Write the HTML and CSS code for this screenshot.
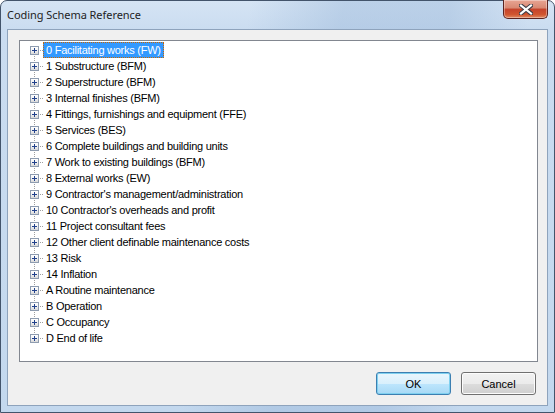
FILE: index.html
```html
<!DOCTYPE html>
<html lang="en">
<head>
    <meta charset="UTF-8">
    <title>Coding Schema Reference</title>
    <link rel="stylesheet" href="styles.css">
</head>
<body>
    <div class="window">
        <div class="titlebar">
            <span class="title">Coding Schema Reference</span>
            <button class="close" aria-label="Close">
                <svg width="14" height="11" viewBox="0 0 14 11">
                    <path d="M2 1.5 L12 9.5 M12 1.5 L2 9.5" stroke="#3b3b45" stroke-width="4.2" stroke-linecap="square"/>
                    <path d="M2 1.5 L12 9.5 M12 1.5 L2 9.5" stroke="#ffffff" stroke-width="2.2" stroke-linecap="square"/>
                </svg>
            </button>
        </div>

        <div class="client">
            <ul class="tree">
                <li><span class="toggle"></span><span class="branch"></span><span class="label selected">0 Facilitating works (FW)</span></li>
                <li><span class="toggle"></span><span class="branch"></span><span class="label">1 Substructure (BFM)</span></li>
                <li><span class="toggle"></span><span class="branch"></span><span class="label">2 Superstructure (BFM)</span></li>
                <li><span class="toggle"></span><span class="branch"></span><span class="label">3 Internal finishes (BFM)</span></li>
                <li><span class="toggle"></span><span class="branch"></span><span class="label">4 Fittings, furnishings and equipment (FFE)</span></li>
                <li><span class="toggle"></span><span class="branch"></span><span class="label">5 Services (BES)</span></li>
                <li><span class="toggle"></span><span class="branch"></span><span class="label">6 Complete buildings and building units</span></li>
                <li><span class="toggle"></span><span class="branch"></span><span class="label">7 Work to existing buildings (BFM)</span></li>
                <li><span class="toggle"></span><span class="branch"></span><span class="label">8 External works (EW)</span></li>
                <li><span class="toggle"></span><span class="branch"></span><span class="label">9 Contractor's management/administration</span></li>
                <li><span class="toggle"></span><span class="branch"></span><span class="label">10 Contractor's overheads and profit</span></li>
                <li><span class="toggle"></span><span class="branch"></span><span class="label">11 Project consultant fees</span></li>
                <li><span class="toggle"></span><span class="branch"></span><span class="label">12 Other client definable maintenance costs</span></li>
                <li><span class="toggle"></span><span class="branch"></span><span class="label">13 Risk</span></li>
                <li><span class="toggle"></span><span class="branch"></span><span class="label">14 Inflation</span></li>
                <li><span class="toggle"></span><span class="branch"></span><span class="label">A Routine maintenance</span></li>
                <li><span class="toggle"></span><span class="branch"></span><span class="label">B Operation</span></li>
                <li><span class="toggle"></span><span class="branch"></span><span class="label">C Occupancy</span></li>
                <li><span class="toggle"></span><span class="branch"></span><span class="label">D End of life</span></li>
            </ul>

            <div class="buttons">
                <button class="btn default">OK</button>
                <button class="btn">Cancel</button>
            </div>
        </div>
    </div>
</body>
</html>
```

FILE: styles.css
```css
html, body {
    margin: 0;
    padding: 0;
    background: #ffffff;
}

.window {
    box-sizing: border-box;
    width: 555px;
    height: 413px;
    display: flex;
    flex-direction: column;
    padding: 0 6px 6px;
    border: 1px solid #43546b;
    border-radius: 7px 7px 0 0;
    background:
        linear-gradient(100deg, rgba(255,255,255,0) 40%, rgba(150,180,215,0.4) 55%, rgba(150,180,215,0.4) 72%, rgba(255,255,255,0) 85%),
        linear-gradient(to bottom, #d5e4f4 0, #cadcf0 30px, #c3d8ee 100%);
    font-family: "Liberation Sans", Arial, sans-serif;
}

/* caption */
.titlebar {
    height: 28px;
    display: flex;
    justify-content: space-between;
    align-items: flex-start;
}

.title {
    margin-top: 6px;
    font-family: "Noto Sans", "Open Sans", sans-serif;
    font-size: 11px;
    color: #1e1e1e;
    letter-spacing: -0.05px;
}

.close {
    width: 45px;
    height: 19px;
    margin: -1px 0 0 0;
    padding: 0;
    border: 1px solid #5a2320;
    border-top: none;
    border-radius: 0 0 5px 5px;
    background: linear-gradient(to bottom, #e8a493 0, #d88872 45%, #c5432c 50%, #d0552f 80%, #e08a62 100%);
    box-shadow: inset 0 0 0 1px rgba(255,255,255,0.35);
    display: flex;
    align-items: center;
    justify-content: center;
}

/* dialog body */
.client {
    flex: 1;
    display: flex;
    flex-direction: column;
    background: #f0f0f0;
    border: 1px solid #8ea3bc;
    padding: 10px 9px 9px 11px;
}

.tree {
    list-style: none;
    margin: 0;
    padding: 1px 0 0;
    height: 322px;
    box-sizing: border-box;
    background: #ffffff;
    border: 1px solid #828790;
    font-size: 11px;
    letter-spacing: -0.25px;
    color: #000000;
}

.tree li {
    height: 16px;
    display: flex;
    align-items: center;
    padding-left: 10px;
    background: repeating-linear-gradient(to bottom, #a0a0a0 0 1px, transparent 1px 2px) 14px 0 / 1px 100% no-repeat;
}

.tree li:first-child {
    background-position: 14px 8px;
}

.tree li:last-child {
    background-size: 1px 8px;
}

.toggle {
    position: relative;
    box-sizing: border-box;
    width: 9px;
    height: 9px;
    border: 1px solid #8e9cb0;
    background: linear-gradient(to bottom, #ffffff 0, #f2f2f2 50%, #d8d8d8 100%);
    flex-shrink: 0;
}

/* the plus sign inside the expander box */
.toggle::before,
.toggle::after {
    content: "";
    position: absolute;
    background: #21418c;
}

.toggle::before {
    left: 1px;
    top: 3px;
    width: 5px;
    height: 1px;
}

.toggle::after {
    left: 3px;
    top: 1px;
    width: 1px;
    height: 5px;
}

.branch {
    width: 4px;
    height: 1px;
    background: repeating-linear-gradient(to right, transparent 0 1px, #a0a0a0 1px 2px);
    flex-shrink: 0;
}

.label {
    box-sizing: border-box;
    height: 16px;
    line-height: 14px;
    padding: 0 2px 0 2px;
    border: 1px solid transparent;
    white-space: nowrap;
}

.label.selected {
    background: #3399ff;
    color: #ffffff;
    border: 1px dotted #cc6600;
}

.buttons {
    display: flex;
    justify-content: flex-end;
    gap: 10px;
    margin-top: 10px;
    padding-right: 2px;
}

.btn {
    width: 75px;
    height: 23px;
    padding: 0;
    font-family: "Liberation Sans", Arial, sans-serif;
    font-size: 11px;
    color: #000000;
    border: 1px solid #707070;
    border-radius: 3px;
    background: linear-gradient(to bottom, #f2f2f2 0, #ebebeb 50%, #dddddd 50%, #cfcfcf 100%);
    box-shadow: inset 0 0 0 1px #fcfcfc;
}

.btn.default {
    border-color: #3c7fb1;
    background: linear-gradient(to bottom, #eaf6fd 0, #d9f0fc 50%, #bee6fd 50%, #a7d9f5 100%);
    box-shadow: inset 0 0 0 1px #7fd0ef;
}
```
